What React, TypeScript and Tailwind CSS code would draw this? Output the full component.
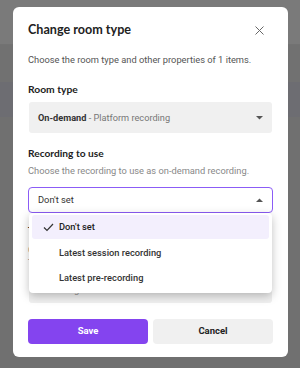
import React from "react";

const Caret = ({ up }: { up?: boolean }) => (
  <svg width="7" height="4" viewBox="0 0 7 4" className="shrink-0">
    {up ? <path d="M0 4 L3.5 0.5 L7 4 Z" fill="#555" /> : <path d="M0 0 L7 0 L3.5 3.5 Z" fill="#555" />}
  </svg>
);

export default function App() {
  return (
    <div className="relative w-[300px] h-[368px] overflow-hidden" style={{ fontFamily: "Roboto, sans-serif" }}>
      {/* page behind the overlay */}
      <div className="flex flex-col h-full">
        <div className="h-[45px] bg-[#7a7a7a] border-b border-[#727272]"></div>
        <div className="h-[37px] bg-[#717171]"></div>
        <div className="h-[35px] bg-[#6d6d72]"></div>
        <div className="flex-1 bg-[#707070]"></div>
      </div>

      {/* dialog */}
      <div className="absolute left-[13px] top-[7px] w-[275px] h-[350px] bg-white rounded-[6px] px-[15px] pt-[13px] flex flex-col">
        <div className="flex items-center justify-between h-[20px]">
          <div className="text-[12.6px] font-bold text-[#222] leading-[20px]" style={{ fontFamily: "Lato, sans-serif" }}>
            Change room type
          </div>
          <svg width="9" height="9" viewBox="0 0 9 9" className="mr-[9px]">
            <path d="M0.5 0.5 L8.5 8.5 M8.5 0.5 L0.5 8.5" stroke="#666" strokeWidth="1" />
          </svg>
        </div>
        <div className="mt-[12px] text-[9.3px] leading-[16px] text-[#555]">
          Choose the room type and other properties of 1 items.
        </div>
        <div className="mt-[12px] text-[10.3px] font-bold leading-[18px] text-[#222]" style={{ fontFamily: "Lato, sans-serif" }}>
          Room type
        </div>
        <div className="mt-[4px] h-[31px] bg-[#f0f0f0] rounded-[3px] flex items-center justify-between pl-[9px] pr-[9px] mx-[1px]">
          <div className="text-[9.2px] text-[#333]">
            <span className="font-bold">On-demand</span>
            <span className="text-[#777]"> - Platform recording</span>
          </div>
          <Caret />
        </div>
        <div className="mt-[11px] text-[10.2px] font-bold leading-[18px] text-[#222]" style={{ fontFamily: "Lato, sans-serif" }}>
          Recording to use
        </div>
        <div className="mt-[1px] text-[9.3px] leading-[16px] text-[#888]">
          Choose the recording to use as on-demand recording.
        </div>
        <div className="mt-[8px] h-[26px] bg-white border border-[#8b5cf6] rounded-[4px] flex items-center justify-between pl-[9px] pr-[9px]">
          <div className="text-[9.3px] text-[#333]">Don't set</div>
          <Caret up />
        </div>
        <div className="mt-[8px] text-[10.2px] font-bold leading-[18px] text-[#222]" style={{ fontFamily: "Lato, sans-serif" }}>
          Tag
        </div>
        <div className="mt-[4px] text-[9.3px] leading-[13px] text-[#888]">
          Choose a tag for the rooms.
          <br />
          Tags group rooms.
        </div>
        <div className="mt-[8px] h-[26px] bg-[#f0f0f0] rounded-[3px] flex items-center justify-between pl-[9px] pr-[9px] mx-[1px]">
          <div className="text-[9.3px] text-[#999]">Select tag</div>
          <Caret />
        </div>
        <div className="mt-[16px] flex gap-[5px]">
          <button className="flex-1 h-[25px] bg-[#8444ef] rounded-[4px] text-white text-[9.5px] font-bold">Save</button>
          <button className="flex-1 h-[25px] bg-[#f0f0f0] rounded-[4px] text-[#222] text-[9.5px] font-bold">Cancel</button>
        </div>
      </div>

      {/* dropdown menu */}
      <div className="absolute left-[29px] top-[213px] w-[243px] bg-white rounded-[4px] shadow-[0_3px_10px_rgba(0,0,0,0.25)] pt-[2px] pb-[3px] px-[3px] flex flex-col">
        <div className="h-[24px] mb-[1px] bg-[#f3effd] rounded-[3px] flex items-center text-[9.3px] font-medium text-[#222]">
          <svg width="11" height="9" viewBox="0 0 11 9" className="ml-[11px] mr-[5px]">
            <path d="M1 4.5 L4 7.5 L10 1" stroke="#333" strokeWidth="1.2" fill="none" />
          </svg>
          Don't set
        </div>
        <div className="h-[25px] flex items-center pl-[27px] text-[9.3px] font-medium text-[#333]">Latest session recording</div>
        <div className="h-[25px] flex items-center pl-[27px] text-[9.3px] font-medium text-[#333]">Latest pre-recording</div>
      </div>
    </div>
  );
}
